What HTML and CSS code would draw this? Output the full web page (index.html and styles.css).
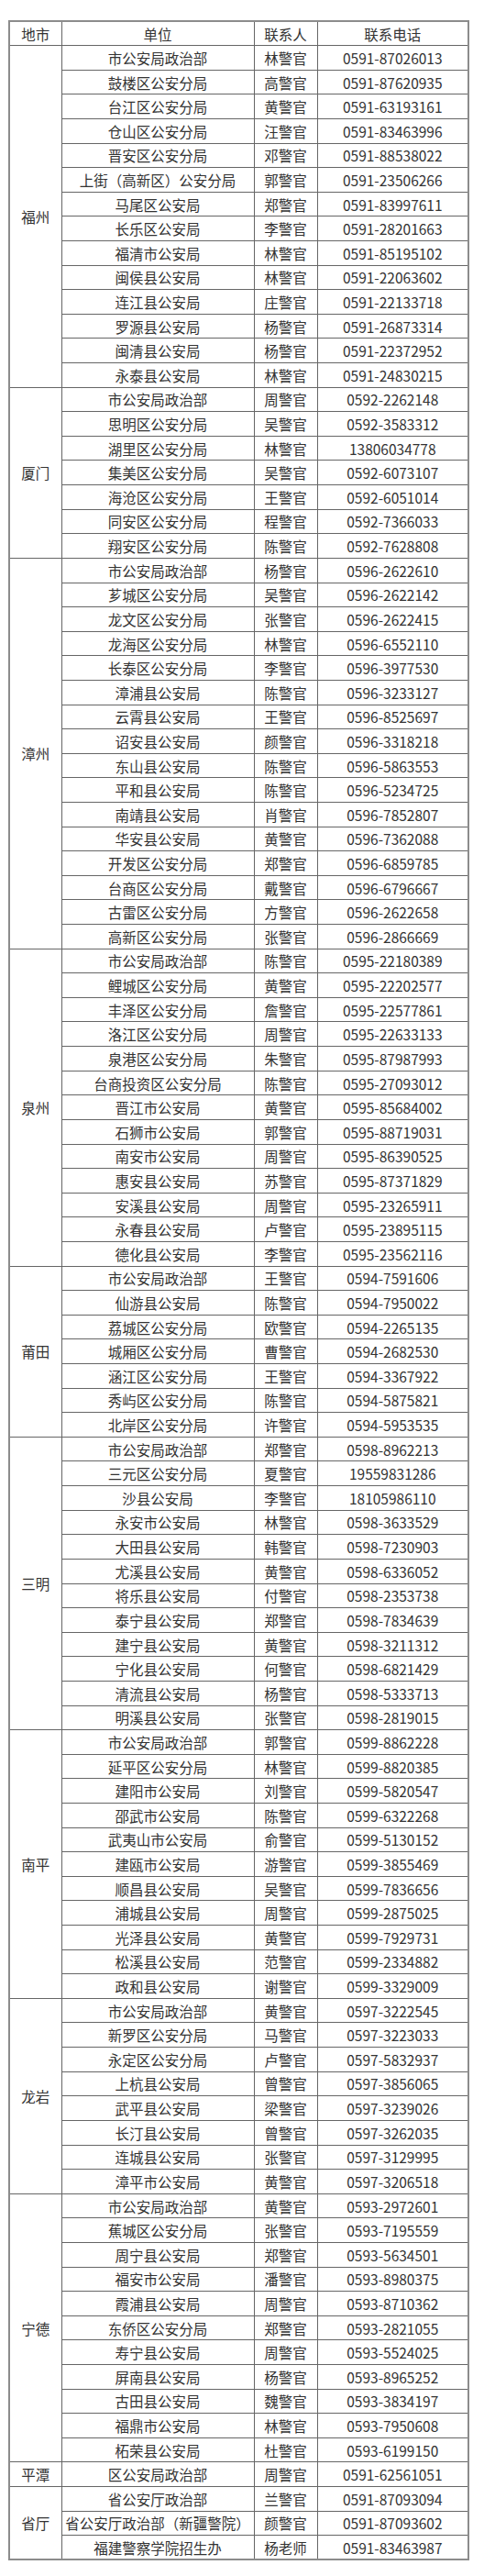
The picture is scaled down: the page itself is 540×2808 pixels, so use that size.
FILE: index.html
```html
<!DOCTYPE html>
<html lang="zh-CN">
<head>
<meta charset="utf-8">
<title>联系电话</title>
<link rel="stylesheet" href="styles.css">
</head>
<body>
<table class="contacts">
<colgroup><col class="c-city"><col class="c-unit"><col class="c-person"><col class="c-phone"></colgroup>
<thead>
<tr><th>地市</th><th>单位</th><th>联系人</th><th>联系电话</th></tr>
</thead>
<tbody>
<tr><td class="city" rowspan="14">福州</td><td>市公安局政治部</td><td>林警官</td><td>0591-87026013</td></tr>
<tr><td>鼓楼区公安分局</td><td>高警官</td><td>0591-87620935</td></tr>
<tr><td>台江区公安分局</td><td>黄警官</td><td>0591-63193161</td></tr>
<tr><td>仓山区公安分局</td><td>汪警官</td><td>0591-83463996</td></tr>
<tr><td>晋安区公安分局</td><td>邓警官</td><td>0591-88538022</td></tr>
<tr><td>上街（高新区）公安分局</td><td>郭警官</td><td>0591-23506266</td></tr>
<tr><td>马尾区公安局</td><td>郑警官</td><td>0591-83997611</td></tr>
<tr><td>长乐区公安局</td><td>李警官</td><td>0591-28201663</td></tr>
<tr><td>福清市公安局</td><td>林警官</td><td>0591-85195102</td></tr>
<tr><td>闽侯县公安局</td><td>林警官</td><td>0591-22063602</td></tr>
<tr><td>连江县公安局</td><td>庄警官</td><td>0591-22133718</td></tr>
<tr><td>罗源县公安局</td><td>杨警官</td><td>0591-26873314</td></tr>
<tr><td>闽清县公安局</td><td>杨警官</td><td>0591-22372952</td></tr>
<tr><td>永泰县公安局</td><td>林警官</td><td>0591-24830215</td></tr>

<tr><td class="city" rowspan="7">厦门</td><td>市公安局政治部</td><td>周警官</td><td>0592-2262148</td></tr>
<tr><td>思明区公安分局</td><td>吴警官</td><td>0592-3583312</td></tr>
<tr><td>湖里区公安分局</td><td>林警官</td><td>13806034778</td></tr>
<tr><td>集美区公安分局</td><td>吴警官</td><td>0592-6073107</td></tr>
<tr><td>海沧区公安分局</td><td>王警官</td><td>0592-6051014</td></tr>
<tr><td>同安区公安分局</td><td>程警官</td><td>0592-7366033</td></tr>
<tr><td>翔安区公安分局</td><td>陈警官</td><td>0592-7628808</td></tr>

<tr><td class="city" rowspan="16">漳州</td><td>市公安局政治部</td><td>杨警官</td><td>0596-2622610</td></tr>
<tr><td>芗城区公安分局</td><td>吴警官</td><td>0596-2622142</td></tr>
<tr><td>龙文区公安分局</td><td>张警官</td><td>0596-2622415</td></tr>
<tr><td>龙海区公安分局</td><td>林警官</td><td>0596-6552110</td></tr>
<tr><td>长泰区公安分局</td><td>李警官</td><td>0596-3977530</td></tr>
<tr><td>漳浦县公安局</td><td>陈警官</td><td>0596-3233127</td></tr>
<tr><td>云霄县公安局</td><td>王警官</td><td>0596-8525697</td></tr>
<tr><td>诏安县公安局</td><td>颜警官</td><td>0596-3318218</td></tr>
<tr><td>东山县公安局</td><td>陈警官</td><td>0596-5863553</td></tr>
<tr><td>平和县公安局</td><td>陈警官</td><td>0596-5234725</td></tr>
<tr><td>南靖县公安局</td><td>肖警官</td><td>0596-7852807</td></tr>
<tr><td>华安县公安局</td><td>黄警官</td><td>0596-7362088</td></tr>
<tr><td>开发区公安分局</td><td>郑警官</td><td>0596-6859785</td></tr>
<tr><td>台商区公安分局</td><td>戴警官</td><td>0596-6796667</td></tr>
<tr><td>古雷区公安分局</td><td>方警官</td><td>0596-2622658</td></tr>
<tr><td>高新区公安分局</td><td>张警官</td><td>0596-2866669</td></tr>

<tr><td class="city" rowspan="13">泉州</td><td>市公安局政治部</td><td>陈警官</td><td>0595-22180389</td></tr>
<tr><td>鲤城区公安分局</td><td>黄警官</td><td>0595-22202577</td></tr>
<tr><td>丰泽区公安分局</td><td>詹警官</td><td>0595-22577861</td></tr>
<tr><td>洛江区公安分局</td><td>周警官</td><td>0595-22633133</td></tr>
<tr><td>泉港区公安分局</td><td>朱警官</td><td>0595-87987993</td></tr>
<tr><td>台商投资区公安分局</td><td>陈警官</td><td>0595-27093012</td></tr>
<tr><td>晋江市公安局</td><td>黄警官</td><td>0595-85684002</td></tr>
<tr><td>石狮市公安局</td><td>郭警官</td><td>0595-88719031</td></tr>
<tr><td>南安市公安局</td><td>周警官</td><td>0595-86390525</td></tr>
<tr><td>惠安县公安局</td><td>苏警官</td><td>0595-87371829</td></tr>
<tr><td>安溪县公安局</td><td>周警官</td><td>0595-23265911</td></tr>
<tr><td>永春县公安局</td><td>卢警官</td><td>0595-23895115</td></tr>
<tr><td>德化县公安局</td><td>李警官</td><td>0595-23562116</td></tr>

<tr><td class="city" rowspan="7">莆田</td><td>市公安局政治部</td><td>王警官</td><td>0594-7591606</td></tr>
<tr><td>仙游县公安局</td><td>陈警官</td><td>0594-7950022</td></tr>
<tr><td>荔城区公安分局</td><td>欧警官</td><td>0594-2265135</td></tr>
<tr><td>城厢区公安分局</td><td>曹警官</td><td>0594-2682530</td></tr>
<tr><td>涵江区公安分局</td><td>王警官</td><td>0594-3367922</td></tr>
<tr><td>秀屿区公安分局</td><td>陈警官</td><td>0594-5875821</td></tr>
<tr><td>北岸区公安分局</td><td>许警官</td><td>0594-5953535</td></tr>

<tr><td class="city" rowspan="12">三明</td><td>市公安局政治部</td><td>郑警官</td><td>0598-8962213</td></tr>
<tr><td>三元区公安分局</td><td>夏警官</td><td>19559831286</td></tr>
<tr><td>沙县公安局</td><td>李警官</td><td>18105986110</td></tr>
<tr><td>永安市公安局</td><td>林警官</td><td>0598-3633529</td></tr>
<tr><td>大田县公安局</td><td>韩警官</td><td>0598-7230903</td></tr>
<tr><td>尤溪县公安局</td><td>黄警官</td><td>0598-6336052</td></tr>
<tr><td>将乐县公安局</td><td>付警官</td><td>0598-2353738</td></tr>
<tr><td>泰宁县公安局</td><td>郑警官</td><td>0598-7834639</td></tr>
<tr><td>建宁县公安局</td><td>黄警官</td><td>0598-3211312</td></tr>
<tr><td>宁化县公安局</td><td>何警官</td><td>0598-6821429</td></tr>
<tr><td>清流县公安局</td><td>杨警官</td><td>0598-5333713</td></tr>
<tr><td>明溪县公安局</td><td>张警官</td><td>0598-2819015</td></tr>

<tr><td class="city" rowspan="11">南平</td><td>市公安局政治部</td><td>郭警官</td><td>0599-8862228</td></tr>
<tr><td>延平区公安分局</td><td>林警官</td><td>0599-8820385</td></tr>
<tr><td>建阳市公安局</td><td>刘警官</td><td>0599-5820547</td></tr>
<tr><td>邵武市公安局</td><td>陈警官</td><td>0599-6322268</td></tr>
<tr><td>武夷山市公安局</td><td>俞警官</td><td>0599-5130152</td></tr>
<tr><td>建瓯市公安局</td><td>游警官</td><td>0599-3855469</td></tr>
<tr><td>顺昌县公安局</td><td>吴警官</td><td>0599-7836656</td></tr>
<tr><td>浦城县公安局</td><td>周警官</td><td>0599-2875025</td></tr>
<tr><td>光泽县公安局</td><td>黄警官</td><td>0599-7929731</td></tr>
<tr><td>松溪县公安局</td><td>范警官</td><td>0599-2334882</td></tr>
<tr><td>政和县公安局</td><td>谢警官</td><td>0599-3329009</td></tr>

<tr><td class="city" rowspan="8">龙岩</td><td>市公安局政治部</td><td>黄警官</td><td>0597-3222545</td></tr>
<tr><td>新罗区公安分局</td><td>马警官</td><td>0597-3223033</td></tr>
<tr><td>永定区公安分局</td><td>卢警官</td><td>0597-5832937</td></tr>
<tr><td>上杭县公安局</td><td>曾警官</td><td>0597-3856065</td></tr>
<tr><td>武平县公安局</td><td>梁警官</td><td>0597-3239026</td></tr>
<tr><td>长汀县公安局</td><td>曾警官</td><td>0597-3262035</td></tr>
<tr><td>连城县公安局</td><td>张警官</td><td>0597-3129995</td></tr>
<tr><td>漳平市公安局</td><td>黄警官</td><td>0597-3206518</td></tr>

<tr><td class="city" rowspan="11">宁德</td><td>市公安局政治部</td><td>黄警官</td><td>0593-2972601</td></tr>
<tr><td>蕉城区公安分局</td><td>张警官</td><td>0593-7195559</td></tr>
<tr><td>周宁县公安局</td><td>郑警官</td><td>0593-5634501</td></tr>
<tr><td>福安市公安局</td><td>潘警官</td><td>0593-8980375</td></tr>
<tr><td>霞浦县公安局</td><td>周警官</td><td>0593-8710362</td></tr>
<tr><td>东侨区公安分局</td><td>郑警官</td><td>0593-2821055</td></tr>
<tr><td>寿宁县公安局</td><td>周警官</td><td>0593-5524025</td></tr>
<tr><td>屏南县公安局</td><td>杨警官</td><td>0593-8965252</td></tr>
<tr><td>古田县公安局</td><td>魏警官</td><td>0593-3834197</td></tr>
<tr><td>福鼎市公安局</td><td>林警官</td><td>0593-7950608</td></tr>
<tr><td>柘荣县公安局</td><td>杜警官</td><td>0593-6199150</td></tr>

<tr><td class="city">平潭</td><td>区公安局政治部</td><td>周警官</td><td>0591-62561051</td></tr>

<tr><td class="city" rowspan="3">省厅</td><td>省公安厅政治部</td><td>兰警官</td><td>0591-87093094</td></tr>
<tr><td>省公安厅政治部（新疆警院）</td><td>颜警官</td><td>0591-87093602</td></tr>
<tr><td>福建警察学院招生办</td><td>杨老师</td><td>0591-83463987</td></tr>
</tbody>
</table>
</body>
</html>
```

FILE: styles.css
```css
html, body {
  margin: 0;
  padding: 0;
  background: #ffffff;
}

body {
  padding: 22px 0 0 9px;
  font-family: "Noto Sans CJK SC", "Noto Sans", sans-serif;
  color: #333333;
}

.contacts {
  border-collapse: collapse;
  width: 501px;
  table-layout: fixed;
  border: 2px solid #8c8c8c;
  font-size: 15.5px;
}

.c-city { width: 57px; }
.c-unit { width: 210px; }
.c-person { width: 69px; }
.c-phone { width: 165px; }

.contacts tr {
  height: 26.61px;
}

.contacts th,
.contacts td {
  border: 1px solid #666666;
  padding: 0;
  text-align: center;
  vertical-align: middle;
  line-height: 20px;
  font-weight: normal;
  white-space: nowrap;
  overflow: hidden;
}
```
